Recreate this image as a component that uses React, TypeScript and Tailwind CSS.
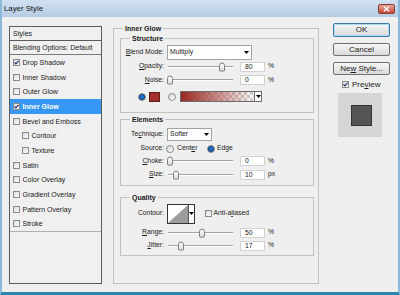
import React from "react";

type Effect = { name: string; checked?: boolean; active?: boolean; sub?: boolean };

const effects: Effect[] = [
  { name: "Drop Shadow", checked: true },
  { name: "Inner Shadow" },
  { name: "Outer Glow" },
  { name: "Inner Glow", checked: true, active: true },
  { name: "Bevel and Emboss" },
  { name: "Contour", sub: true },
  { name: "Texture", sub: true },
  { name: "Satin" },
  { name: "Color Overlay" },
  { name: "Gradient Overlay" },
  { name: "Pattern Overlay" },
  { name: "Stroke" },
];

function CheckBox({ checked, className = "" }: { checked?: boolean; className?: string }) {
  return (
    <span
      className={`w-[7px] h-[7px] shrink-0 border border-[#8c8c8c] bg-gradient-to-br from-[#d9d9d9] to-white flex items-center justify-center ${className}`}
    >
      {checked && (
        <svg width="5" height="5" viewBox="0 0 5 5">
          <path d="M0.5 2.4 L1.9 3.9 L4.6 0.8" fill="none" stroke="#1b2c66" strokeWidth="1.1" />
        </svg>
      )}
    </span>
  );
}

function Radio({ on, className = "" }: { on?: boolean; className?: string }) {
  return (
    <span
      className={`w-[8px] h-[8px] shrink-0 rounded-full border border-[#8a8a8a] bg-gradient-to-br from-[#d6d6d6] to-white flex items-center justify-center ${className}`}
    >
      {on && <span className="w-[4px] h-[4px] rounded-full bg-[#1e74cc] ring-1 ring-[#0f3f78]" />}
    </span>
  );
}

function Arrow() {
  return (
    <svg width="5" height="3" viewBox="0 0 5 3">
      <path d="M0 0H5L2.5 3Z" fill="#000" />
    </svg>
  );
}

function Label({ children }: { children: React.ReactNode }) {
  return <span className="w-[43px] shrink-0 text-right">{children}</span>;
}

// thumb centre, px from the slider's left edge
function Slider({ at }: { at: number }) {
  return (
    <div className="relative ml-[3px] w-[68px] h-full flex items-center">
      <div className="ml-[1px] w-[65px] h-[2px] border-t border-b border-[#a3a3a3] border-b-white" />
      <span
        className="absolute top-1/2 -translate-y-1/2 w-[6px] h-[9px] rounded-t-[3px] rounded-b-[1px] border border-[#7d7d7d] bg-gradient-to-b from-white to-[#dedede]"
        style={{ left: at - 3 }}
      />
    </div>
  );
}

function NumBox({ v, unit }: { v: string; unit: string }) {
  return (
    <>
      <span className="ml-[5px] w-[25px] h-[10px] bg-white border border-[#d2d2d2] pl-[4px] leading-[8px]">{v}</span>
      <span className="ml-[3px]">{unit}</span>
    </>
  );
}

function SliderRow({
  label,
  at,
  v,
  unit = "%",
  cls,
}: {
  label: React.ReactNode;
  at: number;
  v: string;
  unit?: string;
  cls: string;
}) {
  return (
    <div className={`flex items-center ${cls}`}>
      <Label>{label}</Label>
      <Slider at={at} />
      <NumBox v={v} unit={unit} />
    </div>
  );
}

function Legend({ children, cls }: { children: React.ReactNode; cls: string }) {
  return (
    <div className={`-mt-[5px] w-fit h-[9px] px-[2px] leading-[9px] text-[7px] font-bold bg-[#efefef] ${cls}`}>
      {children}
    </div>
  );
}

function Button({ children, focused, cls }: { children: React.ReactNode; focused?: boolean; cls: string }) {
  return (
    <div
      className={`w-[57px] flex items-center justify-center rounded-[2px] border bg-gradient-to-b from-[#f7f7f7] to-[#dadada] ${
        focused ? "border-[#3d7bad] shadow-[inset_0_0_0_1px_#a9dcf3]" : "border-[#707070]"
      } ${cls}`}
    >
      {children}
    </div>
  );
}

export default function App() {
  return (
    <div className="w-[400px] h-[295px] overflow-hidden flex flex-col bg-[#efefef] border-x-2 border-b-[3px] border-[#8cb9d8] border-b-[#2a86aa] font-['Liberation_Sans',Arial,sans-serif] text-[#1a1a1a] leading-none">
      {/* title bar */}
      <div className="h-[17px] shrink-0 flex items-center justify-between pl-[2px] pr-[3px] bg-gradient-to-b from-[#d0e1f2] to-[#b6cce4]">
        <span className="text-[7.8px] text-[#111]">Layer Style</span>
        <div className="w-[17px] h-[10px] rounded-[2px] border border-[#8a3b32] bg-gradient-to-b from-[#eaa698] to-[#c2473a] flex items-center justify-center">
          <svg width="7" height="6" viewBox="0 0 7 6">
            <path d="M1 0.8 L6 5.2 M6 0.8 L1 5.2" stroke="#fff" strokeWidth="1.4" />
          </svg>
        </div>
      </div>

      <div className="flex items-start">
        {/* styles list */}
        <div className="ml-[7px] mt-[9px] w-[93px] h-[258px] shrink-0 border border-[#5b5b5b] bg-[#f0f0f0] text-[7px] flex flex-col">
          <div className="h-[14px] shrink-0 border-b border-[#5b5b5b] pl-[3px] flex items-center">Styles</div>
          <div className="h-[14px] shrink-0 border-b border-[#7a7a7a] pl-[3px] flex items-center">
            Blending Options: Default
          </div>
          {effects.map((e) => (
            <div
              key={e.name}
              className={`h-[14.7px] shrink-0 flex items-center ${e.sub ? "pl-[12px]" : "pl-[3px]"} ${
                e.active ? "bg-[#3797f5] text-white font-bold" : ""
              }`}
            >
              <CheckBox checked={e.checked} />
              <span className="ml-[2.5px]">{e.name}</span>
            </div>
          ))}
          <div className="h-px shrink-0 bg-[#b0b0b0]" />
        </div>

        {/* Inner Glow group */}
        <div className="ml-[11px] mt-[11px] w-[206px] h-[256px] shrink-0 border border-[#c2c2c2] px-[6px] text-[6.8px] flex flex-col">
          <Legend cls="ml-[3px]">Inner Glow</Legend>

          {/* Structure */}
          <div className="mt-[5px] w-[194px] h-[75px] shrink-0 border border-[#c2c2c2] flex flex-col">
            <Legend cls="ml-[9px]">Structure</Legend>
            <div className="mt-[2px] h-[15px] flex items-center">
              <Label>
                <span className="underline">B</span>lend Mode:
              </Label>
              <div className="ml-[3px] w-[85px] h-[15px] bg-white border border-[#a3a3a3] pl-[2px] pr-[2px] flex items-center justify-between">
                <span>Multiply</span>
                <Arrow />
              </div>
            </div>
            <SliderRow
              cls="h-[13px]"
              label={
                <>
                  <span className="underline">O</span>pacity:
                </>
              }
              at={54.7}
              v="80"
            />
            <SliderRow
              cls="h-[14px]"
              label={
                <>
                  <span className="underline">N</span>oise:
                </>
              }
              at={3}
              v="0"
            />
            <div className="mt-[3px] h-[13px] flex items-center">
              <Radio on className="ml-[17px]" />
              <span className="ml-[3px] w-[11px] h-[10px] border border-[#5e1d18] bg-[#a1322b]" />
              <Radio className="ml-[8px]" />
              <div className="ml-[4px] w-[82px] h-[11px] border border-[#6b6b6b] flex">
                <div className="flex-1 bg-[repeating-conic-gradient(#cfcfcf_0%_25%,#ffffff_0%_50%)] bg-[length:6px_6px]">
                  <div className="w-full h-full bg-gradient-to-r from-[#982821] via-[#b15a55]/70 to-transparent" />
                </div>
                <div className="w-[7px] border-l border-[#6b6b6b] bg-white flex items-center justify-center">
                  <Arrow />
                </div>
              </div>
            </div>
          </div>

          {/* Elements */}
          <div className="mt-[6px] w-[194px] h-[67px] shrink-0 border border-[#c2c2c2] flex flex-col">
            <Legend cls="ml-[9px]">Elements</Legend>
            <div className="mt-[4px] h-[13px] flex items-center">
              <Label>
                Te<span className="underline">c</span>hnique:
              </Label>
              <div className="ml-[3px] w-[45px] h-[13px] bg-white border border-[#a3a3a3] pl-[2px] pr-[2px] flex items-center justify-between">
                <span>Softer</span>
                <Arrow />
              </div>
            </div>
            <div className="mt-[1px] h-[13px] flex items-center">
              <Label>Source:</Label>
              <Radio className="ml-[2px]" />
              <span className="ml-[3px] w-[30px]">
                Cent<span className="underline">e</span>r
              </span>
              <Radio on />
              <span className="ml-[2px]">Edge</span>
            </div>
            <SliderRow
              cls="h-[12px]"
              label={
                <>
                  <span className="underline">C</span>hoke:
                </>
              }
              at={3}
              v="0"
            />
            <SliderRow
              cls="mt-[1px] h-[13px]"
              label={
                <>
                  <span className="underline">S</span>ize:
                </>
              }
              at={8.7}
              v="10"
              unit="px"
            />
          </div>

          {/* Quality */}
          <div className="mt-[11px] w-[194px] h-[59px] shrink-0 border border-[#c2c2c2] flex flex-col">
            <Legend cls="ml-[9px]">Quality</Legend>
            <div className="mt-[1px] h-[21px] flex items-center">
              <Label>Contour:</Label>
              <div className="ml-[3px] w-[28px] h-[20px] border border-[#333] bg-white flex">
                <svg width="20" height="18" viewBox="0 0 20 18" className="shrink-0">
                  <path d="M0 18 L20 0 L20 18 Z" fill="#9c9c9c" />
                </svg>
                <div className="flex-1 border-l border-[#555] flex items-center justify-center">
                  <Arrow />
                </div>
              </div>
              <CheckBox className="ml-[10px]" />
              <span className="ml-[1.5px]">
                Anti-a<span className="underline">l</span>iased
              </span>
            </div>
            <SliderRow
              cls="mt-[2px] h-[13px]"
              label={
                <>
                  <span className="underline">R</span>ange:
                </>
              }
              at={35.3}
              v="50"
            />
            <SliderRow
              cls="h-[13px]"
              label={
                <>
                  <span className="underline">J</span>itter:
                </>
              }
              at={14}
              v="17"
            />
          </div>
        </div>

        {/* buttons */}
        <div className="ml-[14px] mt-[6px] flex flex-col text-[8px]">
          <Button focused cls="h-[14px]">
            OK
          </Button>
          <Button cls="mt-[6px] h-[13px]">Cancel</Button>
          <Button cls="mt-[6px] h-[13px]">
            <span>
              Ne<span className="underline">w</span> Style...
            </span>
          </Button>
          <div className="mt-[5px] h-[9px] flex items-center">
            <CheckBox checked className="ml-[9px]" />
            <span className="ml-[3px]">
              Pre<span className="underline">v</span>iew
            </span>
          </div>
          <div className="mt-[4px] ml-[5px] w-[44px] h-[44px] bg-[#d6d6d6] flex items-center justify-center pl-[3px]">
            <div className="w-[21px] h-[21px] bg-[#555555] border border-[#333]" />
          </div>
        </div>
      </div>
    </div>
  );
}
